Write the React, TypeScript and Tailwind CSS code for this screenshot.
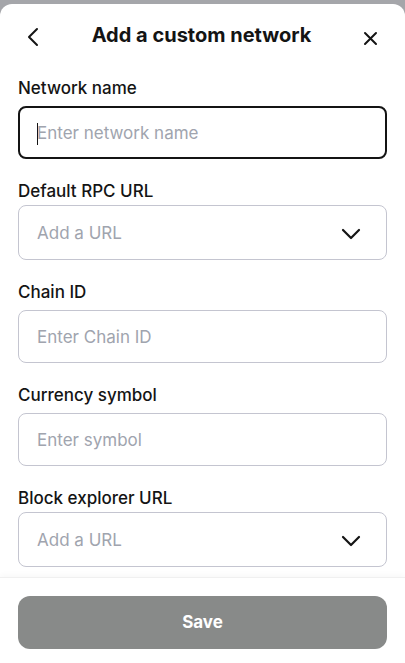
const fields = [
  { label: 'Network name', placeholder: 'Enter network name', kind: 'focused' },
  { label: 'Default RPC URL', placeholder: 'Add a URL', kind: 'select' },
  { label: 'Chain ID', placeholder: 'Enter Chain ID', kind: 'text' },
  { label: 'Currency symbol', placeholder: 'Enter symbol', kind: 'text' },
  { label: 'Block explorer URL', placeholder: 'Add a URL', kind: 'select' },
]

function Caret() {
  return (
    <svg width="20" height="12" viewBox="0 0 20 12" fill="none" stroke="#141414" strokeWidth="2.2" strokeLinecap="round" strokeLinejoin="round">
      <path d="M2 2 L10 10 L18 2" />
    </svg>
  )
}

function Field({ label, placeholder, kind }: { label: string; placeholder: string; kind: string }) {
  if (kind === 'select') {
    return (
      <div className="flex flex-col">
        <label className="text-[17px] leading-6 font-medium text-[#141414] mb-[2px]">{label}</label>
        <div className="h-[55px] rounded-lg border border-[#c4c5d0] flex items-center pl-[18px] pr-[25px] pt-[2px]">
          <span className="flex-1 text-[17px] text-[#a0a4ae]">{placeholder}</span>
          <Caret />
        </div>
      </div>
    )
  }
  const focused = kind === 'focused'
  return (
    <div className="flex flex-col">
      <label className="text-[17px] leading-6 font-medium text-[#141414] mb-[6px]">{label}</label>
      <div
        className={
          focused
            ? 'h-[53px] rounded-lg border-2 border-[#141414] flex items-center px-[17px] pt-[3px]'
            : 'h-[53px] rounded-lg border border-[#c4c5d0] flex items-center px-[18px] pt-[3px]'
        }
      >
        {focused && <span className="w-px h-[22px] bg-[#141414] -mr-px" />}
        <span className="text-[17px] text-[#a0a4ae]">{placeholder}</span>
      </div>
    </div>
  )
}

export default function App() {
  return (
    <div
      className="w-[405px] h-[663px] bg-[#a5a6aa] flex flex-col overflow-hidden"
      style={{ fontFamily: 'Inter, "Noto Sans", sans-serif' }}
    >
      <div className="h-1 shrink-0" />
      <div className="flex-1 bg-white rounded-t-xl flex flex-col">
        <div className="h-[62px] flex items-center pl-[26px] pr-[27px]">
          <svg width="14" height="20" viewBox="0 0 14 20" fill="none" stroke="#141414" strokeWidth="2" strokeLinecap="round" strokeLinejoin="round" className="mt-[4px]">
            <path d="M11 2 L3 10 L11 18" />
          </svg>
          <h1 className="flex-1 text-center text-[20px] font-bold text-[#141414]">Add a custom network</h1>
          <svg width="15" height="15" viewBox="0 0 15 15" fill="none" stroke="#141414" strokeWidth="2" strokeLinecap="round" className="mt-[6px]">
            <path d="M2 2 L13 13 M13 2 L2 13" />
          </svg>
        </div>
        <div className="flex flex-col gap-5 px-[18px] pt-[10px]">
          {fields.map((f) => (
            <Field key={f.label} {...f} />
          ))}
        </div>
        <div className="mt-auto border-t border-[#f0f0f0] shadow-[0_-2px_6px_rgba(0,0,0,0.03)] px-[18px] pt-[18px] pb-[14px]">
          <button className="w-full h-[53px] rounded-xl bg-[#888a89] text-white text-[17px] font-bold pt-px">Save</button>
        </div>
      </div>
    </div>
  )
}
